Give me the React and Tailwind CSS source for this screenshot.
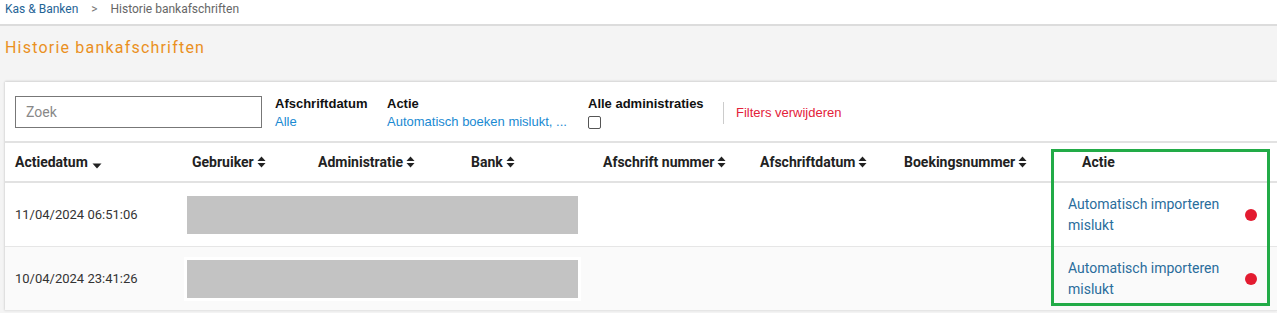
import React from "react";

const SortIcon = () => (
  <svg width="9" height="12" viewBox="0 0 9 12" className="ml-[3px] inline-block">
    <path d="M4.5 0.5 L8.5 5 H0.5 Z" fill="#222" />
    <path d="M4.5 11.5 L8.5 7 H0.5 Z" fill="#222" />
  </svg>
);

const SortDown = () => (
  <svg width="10" height="12" viewBox="0 0 10 12" className="ml-[4px] inline-block relative top-[3px]">
    <path d="M0.5 4.5 H9.5 L5 9.5 Z" fill="#222" />
  </svg>
);

const cols = "grid grid-cols-[177px_126px_153px_132px_157px_144px_164px_1fr]";

function Row({ date, alt }) {
  return (
    <div className={`${cols} h-[64px] border-b border-[#e6e6e6] items-center ${alt ? "bg-[#fafafa]" : "bg-white"}`}>
      <div className="pl-[10px] text-[13px] text-[#333]">{date}</div>
      <div className="col-span-3 ml-[2px] mr-[12px] bg-white p-[3px]">
        <div className="h-[38px] bg-[#c3c3c3]" />
      </div>
      <div />
      <div />
      <div />
      <div className="flex items-center justify-between pl-[10px] pr-[20px]">
        <span className="text-[14px] leading-[21px] text-[#2a6d9c] w-[160px]">Automatisch importeren mislukt</span>
        <span className="w-[12px] h-[12px] rounded-full bg-[#e31b30]" />
      </div>
    </div>
  );
}

export default function App() {
  return (
    <div className="w-[1277px] h-[313px] overflow-hidden bg-[#f4f4f4] font-['Roboto',sans-serif]">
      <div className="h-[26px] bg-white border-b-2 border-[#dcdcdc] flex items-start pt-[1px] pl-[5px] text-[12px] leading-[16px]">
        <span className="text-[#1f6496]">Kas &amp; Banken</span>
        <span className="text-[#777] mx-[13px]">&gt;</span>
        <span className="text-[#666]">Historie bankafschriften</span>
      </div>
      <div className="h-[56px] pt-[14px] pl-[5px] text-[16px] leading-[16px] tracking-[1.2px] text-[#ea901e]">
        Historie bankafschriften
      </div>
      <div className="relative ml-[5px] bg-white shadow-[0_-1px_2px_rgba(0,0,0,0.12),-1px_0_2px_rgba(0,0,0,0.06)]">
        <div className="h-[61px] border-b-2 border-[#e2e2e2] flex items-start pt-[14px] pl-[10px] font-['Liberation_Sans',Arial,sans-serif] text-[13px]">
          <div className="w-[247px] h-[32px] border border-[#777] flex items-center pl-[10px] text-[14px] text-[#888] font-['Roboto',sans-serif]">Zoek</div>
          <div className="ml-[13px] w-[112px] flex flex-col">
            <span className="font-bold text-[#111] leading-[15px]">Afschriftdatum</span>
            <span className="text-[#1a8ad2] leading-[15px] mt-[3px]">Alle</span>
          </div>
          <div className="w-[201px] flex flex-col">
            <span className="font-bold text-[#111] leading-[15px]">Actie</span>
            <span className="text-[#1a8ad2] leading-[15px] mt-[3px]">Automatisch boeken mislukt, ...</span>
          </div>
          <div className="w-[135px] flex flex-col">
            <span className="font-bold text-[#111] leading-[15px]">Alle administraties</span>
            <span className="mt-[5px] w-[13px] h-[13px] border border-[#555] rounded-[2px]" />
          </div>
          <div className="mt-[6px] h-[22px] border-l border-[#ccc] pl-[12px] flex items-center text-[#e3223a]">
            Filters verwijderen
          </div>
        </div>
        <div className={`${cols} h-[40px] items-center border-b-2 border-[#e2e2e2] text-[14px] font-bold text-[#222]`}>
          <div className="pl-[10px] flex items-center">Actiedatum<SortDown /></div>
          <div className="pl-[10px] flex items-center">Gebruiker<SortIcon /></div>
          <div className="pl-[10px] flex items-center">Administratie<SortIcon /></div>
          <div className="pl-[10px] flex items-center">Bank<SortIcon /></div>
          <div className="pl-[10px] flex items-center">Afschrift nummer<SortIcon /></div>
          <div className="pl-[10px] flex items-center">Afschriftdatum<SortIcon /></div>
          <div className="pl-[10px] flex items-center">Boekingsnummer<SortIcon /></div>
          <div className="pl-[24px]">Actie</div>
        </div>
        <Row date="11/04/2024 06:51:06" />
        <Row date="10/04/2024 23:41:26" alt />
        <div className="absolute left-[1046px] top-[67px] w-[219px] h-[157px] border-[3px] border-[#22ab47] pointer-events-none" />
      </div>
    </div>
  );
}
